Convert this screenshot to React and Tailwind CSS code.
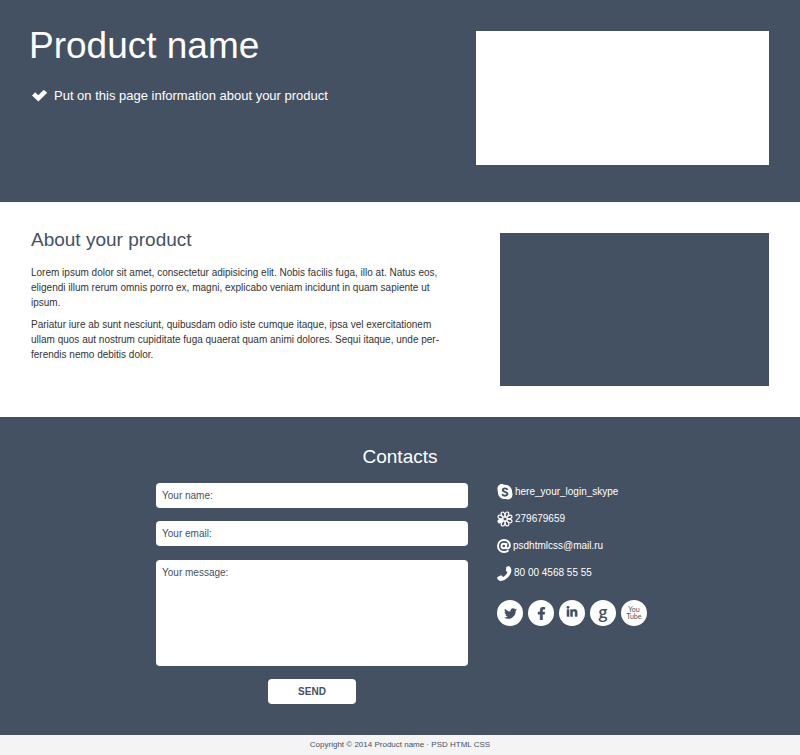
import React from "react";
import { FaTwitter, FaFacebookF, FaLinkedinIn } from "react-icons/fa";

const fieldClass =
  "block w-full rounded bg-white px-[6px] text-[10px] leading-[15px] text-[#445162] placeholder:text-[#445162] placeholder:opacity-100 outline-none";

function CheckIcon() {
  return (
    <svg viewBox="0 0 16 13" className="h-[13px] w-4 shrink-0" fill="#fff" aria-hidden="true">
      <path d="M0 5.400 3.200 2.200 6.300 5.300 11.800 -.2 15.200 2.800 6.400 11.600Z" />
    </svg>
  );
}

function SkypeIcon() {
  return (
    <svg viewBox="0 0 16 16" className="size-4" aria-hidden="true">
      <path
        d="M4.500 .1C5.700 .1 6.500 .5 7 .8 11.900 .3 15.400 3.900 15.100 8.200 16.400 12 14.300 15.400 11.200 15.500 10.200 15.500 9.400 15.300 8.800 15 4 15.600 .5 11.900 .9 7.500-.5 4 1.500 .1 4.500 .1Z"
        fill="#fff"
      />
      <path
        d="M10.500 5.900C10.100 4.700 8.900 4.400 7.900 4.400 6.400 4.400 5.600 5.200 5.700 6.100 5.900 8.200 10.500 7.400 10.500 9.800 10.400 11.200 9.100 11.700 7.900 11.700 6.400 11.700 5.500 11.100 5.200 10"
        fill="none"
        stroke="#445162"
        strokeWidth="1.900"
      />
    </svg>
  );
}

const petals = [22, 67, 112, 157, 202, 292, 337];
const petalPath = "M8 6.200C5.900 4.600 5.600 .7 8 .6 10.400 .7 10.100 4.600 8 6.200Z";

function IcqIcon() {
  return (
    <svg viewBox="0 0 16 16" className="size-4 shrink-0" aria-hidden="true">
      <g fill="#445162" stroke="#fff" strokeWidth="1.200">
        {petals.map((angle) => (
          <path key={angle} d={petalPath} transform={`rotate(${angle} 8 8)`} />
        ))}
        <path d={petalPath} transform="rotate(247 8 8)" fill="#fff" />
      </g>
      <circle cx="8" cy="8" r="1.300" fill="#445162" />
    </svg>
  );
}

function AtIcon() {
  return (
    <svg viewBox="0 0 14 14" className="size-[14px]" fill="none" stroke="#fff" strokeWidth="1.900" aria-hidden="true">
      <circle cx="6.800" cy="7" r="2.300" />
      <path d="M9.500 4.200 9 8.200C9 10.300 12.900 9.700 12.900 6.500 12.900 3.200 10.300 1 7.200 1 3.600 1 1 3.600 1 7.100 1 10.600 3.600 13 7 13 8.800 13 10.400 12.500 11.600 11.400" />
    </svg>
  );
}

function PhoneIcon() {
  return (
    <svg viewBox="0 0 15 15" className="size-[15px]" fill="#fff" aria-hidden="true">
      <path d="M9.300 1.100 11.600 .1C14.800 1.600 15.200 5.200 13 8.700 10.800 12.200 6.800 15 3.200 14.900 1.500 14.700 .5 13.500 0 11.800L.9 10.800 4.300 9.300 6 11C7.800 10.300 9.700 8.300 10.400 6.300L8.900 4.800Z" />
    </svg>
  );
}

const contacts = [
  { Icon: SkypeIcon, text: "here_your_login_skype", href: "skype:here_your_login_skype" },
  { Icon: IcqIcon, text: "279679659", href: "#icq" },
  { Icon: AtIcon, text: "psdhtmlcss@mail.ru", href: "mailto:psdhtmlcss@mail.ru" },
  { Icon: PhoneIcon, text: "80 00 4568 55 55", href: "tel:800045685555" },
];

const socials = [
  { name: "Twitter", content: <FaTwitter className="size-[13px]" /> },
  { name: "Facebook", content: <FaFacebookF className="size-[13px]" stroke="currentColor" strokeWidth="16" /> },
  {
    name: "LinkedIn",
    content: <FaLinkedinIn className="mb-[2px] size-3" stroke="currentColor" strokeWidth="16" />,
  },
  {
    name: "Google",
    content: <span className="pb-[3px] font-['Open_Sans',sans-serif] text-[16px] leading-[16px] font-semibold">g</span>,
  },
  {
    name: "YouTube",
    content: (
      <span className="text-center font-[Lato,sans-serif] text-[7px] leading-[7px] font-normal">
        You
        <br />
        Tube
      </span>
    ),
  },
];

export default function App() {
  return (
    <div className="bg-white font-['Liberation_Sans',Arial,sans-serif] text-[#333]">
      <header className="flex justify-between gap-6 bg-[#445162] px-[31px] pt-[31px] pb-[37px] text-white">
        <div className="-ml-[2px]">
          <h1 className="text-[37px] leading-[30px]">Product name</h1>
          <p className="mt-[27px] ml-[3px] flex items-center gap-[6px] text-[13px] leading-[16px]">
            <CheckIcon />
            Put on this page information about your product
          </p>
        </div>
        <div className="h-[134px] w-[293px] bg-white" />
      </header>

      <section className="flex justify-between gap-6 px-[31px] pt-[31px] pb-[31px]">
        <div className="w-[412px]">
          <h2 className="text-[19px] leading-[14px] text-[#445162]">About your product</h2>
          <p className="mt-[18px] text-[10px] leading-[15px]">
            Lorem ipsum dolor sit amet, consectetur adipisicing elit. Nobis facilis fuga, illo at. Natus eos, eligendi
            illum rerum omnis porro ex, magni, explicabo veniam incidunt in quam sapiente ut ipsum.
          </p>
          <p className="mt-[7px] text-[10px] leading-[15px]">
            Pariatur iure ab sunt nesciunt, quibusdam odio iste cumque itaque, ipsa vel exercitationem ullam quos aut
            nostrum cupiditate fuga quaerat quam animi dolores. Sequi itaque, unde per&shy;ferendis nemo debitis dolor.
          </p>
        </div>
        <div className="h-[153px] w-[269px] bg-[#445162]" />
      </section>

      <section className="bg-[#445162] pt-[30px] pb-[31px] text-white">
        <h2 className="text-center text-[19px] leading-[20px]">Contacts</h2>
        <div className="mx-auto mt-[16px] flex max-w-[488px] gap-[29px]">
          <form className="flex w-[312px] shrink-0 flex-col">
            <input type="text" aria-label="Your name" placeholder="Your name:" className={`${fieldClass} h-[25px]`} />
            <input
              type="email"
              aria-label="Your email"
              placeholder="Your email:"
              className={`${fieldClass} mt-[13px] h-[25px]`}
            />
            <textarea
              aria-label="Your message"
              placeholder="Your message:"
              className={`${fieldClass} mt-[14px] h-[106px] resize-none pt-[5px]`}
            />
            <button
              type="button"
              className="mt-[13px] h-[25px] w-[88px] self-center rounded bg-white text-[10px] font-bold text-[#445162]"
            >
              SEND
            </button>
          </form>
          <div className="pt-px">
            <ul className="flex flex-col gap-[11px]">
              {contacts.map(({ Icon, text, href }) => (
                <li key={text}>
                  <a href={href} className="flex h-4 items-center gap-[2px] text-[10px] leading-4">
                    <Icon />
                    {text}
                  </a>
                </li>
              ))}
            </ul>
            <ul className="mt-[19px] flex gap-[5px]">
              {socials.map(({ name, content }) => (
                <li key={name}>
                  <a
                    href={`#${name.toLowerCase()}`}
                    aria-label={name}
                    className="flex size-[26px] items-center justify-center rounded-full bg-white text-[#445162]"
                  >
                    {content}
                  </a>
                </li>
              ))}
            </ul>
          </div>
        </div>
      </section>

      <footer className="bg-[#f4f4f4] text-center text-[8px] leading-[20px] text-[#445162]">
        Copyright © 2014 Product name · PSD HTML CSS
      </footer>
    </div>
  );
}
